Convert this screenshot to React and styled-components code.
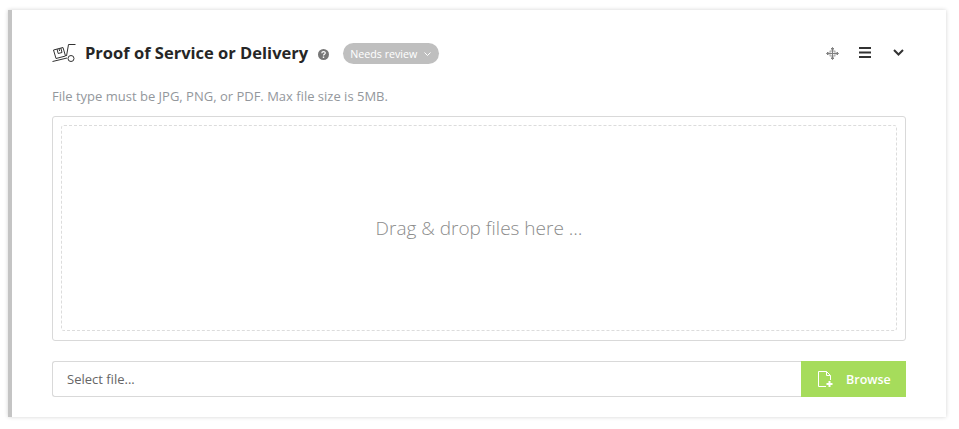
import React from "react";
import styled, { createGlobalStyle } from "styled-components";

const GlobalStyle = createGlobalStyle`
  html, body {
    margin: 0;
    padding: 0;
    background: #fff;
    font-family: "Open Sans", "Liberation Sans", sans-serif;
  }
`;

const Page = styled.div`
  padding: 10px 13px 12px 8px;
`;

const Card = styled.section`
  background: #fff;
  border-left: 4px solid #c4c4c4;
  box-shadow: 0 0 4px rgba(0, 0, 0, 0.18);
  padding: 30px 40px 20px;
  height: 407px;
  box-sizing: border-box;
`;

const Header = styled.header`
  display: flex;
  align-items: center;
  height: 26px;
`;

const Title = styled.h2`
  margin: 0 0 0 9px;
  font-size: 16.5px;
  line-height: 26px;
  font-weight: 700;
  color: #262626;
`;

const HelpIcon = styled.svg`
  width: 11px;
  height: 11px;
  margin-left: 10px;
  margin-top: 3px;
`;

const Badge = styled.button`
  display: flex;
  align-items: center;
  gap: 7px;
  height: 21px;
  width: 96px;
  margin-left: 14px;
  margin-top: 1px;
  padding: 0 0 0 7px;
  border: 0;
  border-radius: 11px;
  background: #bfbfbf;
  color: #fff;
  font: 400 10.7px "Open Sans", sans-serif;
`;

const Actions = styled.div`
  display: flex;
  align-items: center;
  margin-left: auto;
  gap: 20px;
  padding-right: 2px;
`;

const MenuSvg = styled.svg`
  margin-top: -1px;
`;

const ChevronSvg = styled.svg`
  margin-left: 2px;
  margin-top: -2px;
`;

const Hint = styled.p`
  margin: 20px 0 0;
  font-size: 13px;
  line-height: 20px;
  color: #93979c;
`;

const DropZone = styled.div`
  margin-top: 10px;
  height: 225px;
  box-sizing: border-box;
  padding: 8px 8px 9px;
  border: 1px solid #d9d9d9;
  border-radius: 3px;
`;

const DropInner = styled.div`
  height: 100%;
  box-sizing: border-box;
  display: flex;
  align-items: center;
  justify-content: center;
  border: 1px dashed #dcdcdc;
  border-radius: 3px;
  font-size: 19px;
  font-weight: 300;
  color: #8c8c8c;
`;

const FileRow = styled.div`
  display: flex;
  margin-top: 20px;
  height: 36px;
`;

const FileInput = styled.div`
  flex: 1;
  display: flex;
  align-items: center;
  padding-left: 14px;
  border: 1px solid #d9d9d9;
  border-right: 0;
  border-radius: 3px 0 0 3px;
  font-size: 13px;
  color: #666;
`;

const BrowseButton = styled.button`
  width: 105px;
  display: flex;
  align-items: center;
  padding: 0 0 0 16px;
  gap: 12px;
  border: 0;
  background: #a6dc5b;
  color: #fff;
  font: 600 12.5px "Open Sans", sans-serif;
`;

const TruckIcon = () => (
  <svg width="24" height="20" viewBox="0 0 24 20" fill="none" stroke="#333" strokeWidth="1">
    <path d="M23.5 1.5H16.5L14.5 13" />
    <path d="M0.5 18.5L15 15" />
    <path d="M1.5 7L11 4.5L13.5 13L4 15.5Z" />
    <path d="M5 6L6.2 10.5L10 9.5L8.8 5" />
    <path d="M7 5.7L7.6 8" />
    <circle cx="19" cy="15.5" r="3" />
  </svg>
);

const MoveIcon = () => (
  <svg width="13" height="13" viewBox="0 0 13 13" fill="none" stroke="#808080" strokeWidth="1.2">
    <path d="M6.5 1.5V11.5M1.5 6.5H11.5" />
    <path d="M5 2L6.5 .5L8 2Z M5 11L6.5 12.5L8 11Z M2 5L.5 6.5L2 8Z M11 5L12.5 6.5L11 8Z" fill="#808080" strokeWidth="1" />
    <rect x="4" y="4" width="5" height="5" strokeWidth=".7" />
  </svg>
);

const MenuIcon = () => (
  <MenuSvg width="12" height="11" viewBox="0 0 12 11" fill="#333">
    <rect y="0" width="12" height="2" />
    <rect y="4.5" width="12" height="2" />
    <rect y="9" width="12" height="2" />
  </MenuSvg>
);

const ChevronIcon = () => (
  <ChevronSvg width="11" height="7" viewBox="0 0 11 7" fill="none" stroke="#333" strokeWidth="2">
    <path d="M1 1L5.5 5.5L10 1" />
  </ChevronSvg>
);

const SmallChevron = () => (
  <svg width="7" height="4" viewBox="0 0 7 4" fill="none" stroke="#fff" strokeWidth="1">
    <path d="M.5 .5L3.5 3.5L6.5 .5" />
  </svg>
);

const FileIcon = () => (
  <svg width="17" height="17" viewBox="0 0 17 17" fill="none" stroke="#fff" strokeWidth="1">
    <path d="M9 15.5H1.5V.5H9.5L13.5 4.5V9" />
    <path d="M9.5 .5V4.5H13.5" />
    <path d="M12.5 10V16M9.5 13H15.5" strokeWidth="2" />
  </svg>
);

const App = () => {
  return (
    <Page>
      <GlobalStyle />
      <Card>
        <Header>
          <TruckIcon />
          <Title>Proof of Service or Delivery</Title>
          <HelpIcon viewBox="0 0 11 11">
            <circle cx="5.5" cy="5.5" r="5.5" fill="#777" />
            <path d="M3.8 4.2C3.8 2 7.3 2 7.3 4.1C7.3 5.3 5.5 5.2 5.5 6.5" fill="none" stroke="#fff" strokeWidth="1.2" />
            <rect x="4.8" y="7.5" width="1.4" height="1.4" fill="#fff" />
          </HelpIcon>
          <Badge>
            Needs review
            <SmallChevron />
          </Badge>
          <Actions>
            <MoveIcon />
            <MenuIcon />
            <ChevronIcon />
          </Actions>
        </Header>
        <Hint>File type must be JPG, PNG, or PDF. Max file size is 5MB.</Hint>
        <DropZone>
          <DropInner>Drag &amp; drop files here …</DropInner>
        </DropZone>
        <FileRow>
          <FileInput>Select file...</FileInput>
          <BrowseButton>
            <FileIcon />
            Browse
          </BrowseButton>
        </FileRow>
      </Card>
    </Page>
  );
};

export default App;
